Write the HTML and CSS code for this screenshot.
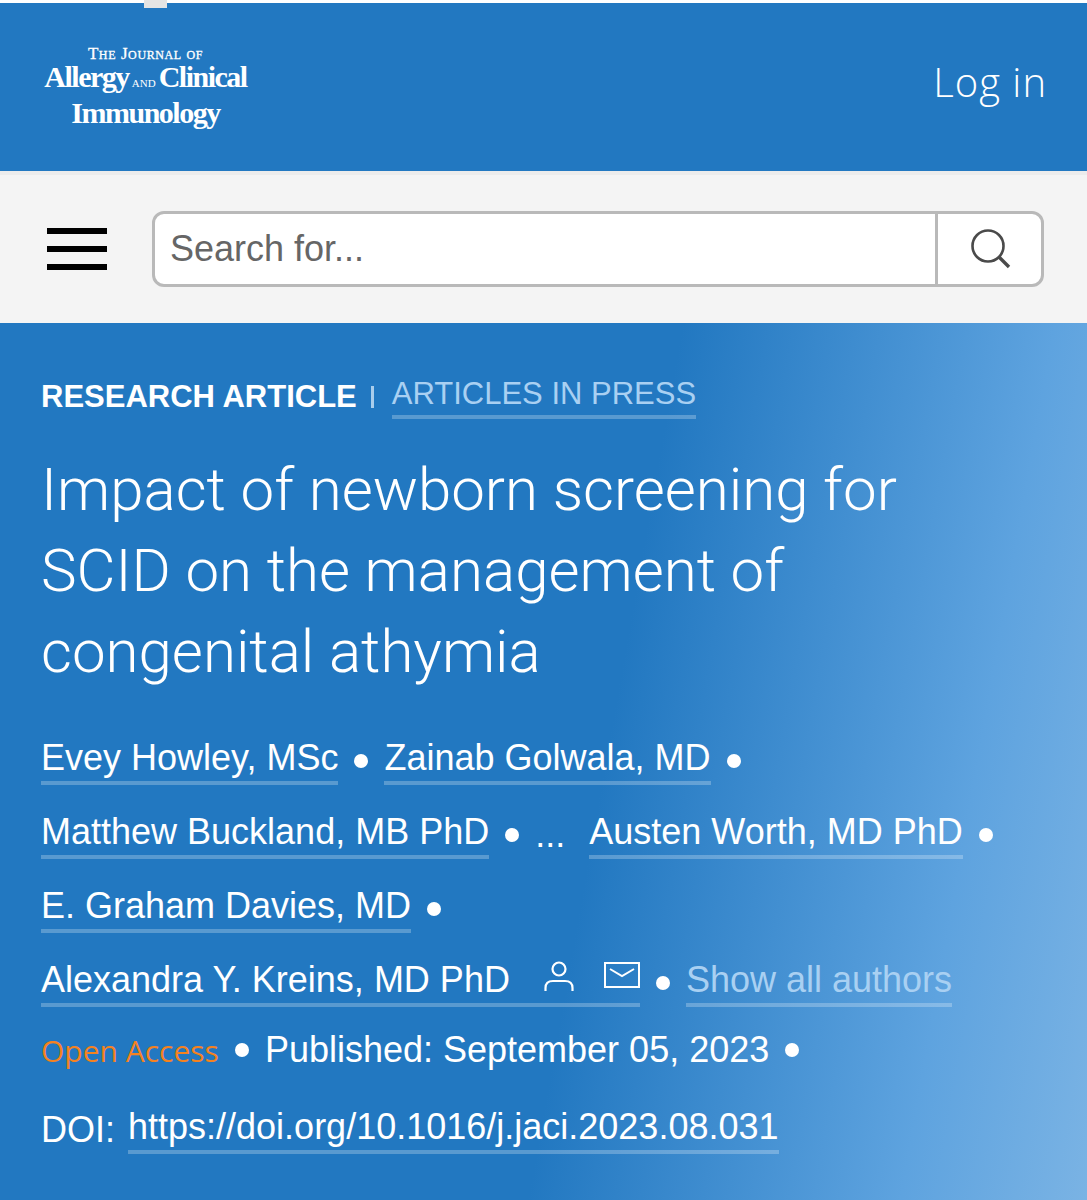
FILE: index.html
```html
<!DOCTYPE html>
<html lang="en">
<head>
  <meta charset="UTF-8">
  <meta name="viewport" content="width=device-width, initial-scale=1.0">
  <title>Impact of newborn screening for SCID</title>
  <link rel="stylesheet" href="styles.css">
</head>
<body>

  <div class="top-strip"><span class="top-tab"></span></div>

  <header class="site-header">
    <a class="logo">
      <span class="logo-line logo-small">The Journal of</span>
      <span class="logo-line logo-big">Allergy<span class="logo-and">and</span>Clinical</span>
      <span class="logo-line logo-big">Immunology</span>
    </a>
    <a class="login">Log in</a>
  </header>

  <nav class="search-bar">
    <div class="burger"><span></span><span></span><span></span></div>
    <div class="search">
      <div class="search-input">Search for...</div>
      <div class="search-btn">
        <svg width="44" height="42" viewBox="0 0 44 42" fill="none" stroke="#4a4a4a">
          <circle cx="20" cy="18" r="15.5" stroke-width="2.6"/>
          <path d="M31 29 L41 39" stroke-width="3.4"/>
        </svg>
      </div>
    </div>
  </nav>

  <main class="hero">
    <div class="kicker">
      <span class="kicker-type">RESEARCH ARTICLE</span>
      <span class="kicker-sep"></span>
      <a class="link kicker-link">ARTICLES IN PRESS</a>
    </div>

    <h1>Impact of newborn screening for SCID on the management of congenital athymia</h1>

    <div class="authors">
      <div class="author-row">
        <a class="link">Evey Howley, MSc</a><i class="dot"></i>
        <a class="link">Zainab Golwala, MD</a><i class="dot"></i>
      </div>
      <div class="author-row">
        <a class="link">Matthew Buckland, MB PhD</a><i class="dot"></i>
        <span class="more">...</span>
        <a class="link">Austen Worth, MD PhD</a><i class="dot"></i>
      </div>
      <div class="author-row">
        <a class="link">E. Graham Davies, MD</a><i class="dot"></i>
      </div>
      <div class="author-row">
        <a class="link corr">Alexandra Y. Kreins, MD PhD
          <svg class="icon-user" width="30" height="32" viewBox="0 0 30 32" fill="none" stroke="#fff" stroke-width="2.2">
            <circle cx="15" cy="9" r="6.5"/>
            <path d="M1.5 31 V28 Q1.5 21 9 21 H21 Q28.5 21 28.5 28 V31"/>
          </svg>
          <svg class="icon-mail" width="36" height="26" viewBox="0 0 36 26" fill="none" stroke="#fff" stroke-width="2">
            <rect x="1" y="1" width="34" height="24"/>
            <path d="M6 7 L18 14 L30 7"/>
          </svg>
        </a><i class="dot"></i>
        <a class="link link-pale">Show all authors</a>
      </div>
    </div>

    <div class="meta-row">
      <span class="open-access">Open Access</span><i class="dot"></i>
      <span class="published">Published: September 05, 2023</span><i class="dot"></i>
    </div>

    <div class="doi-row">
      <span>DOI:</span>
      <a class="link">https://doi.org/10.1016/j.jaci.2023.08.031</a>
    </div>
  </main>

</body>
</html>
```

FILE: styles.css
```css
* {
  box-sizing: border-box;
}

html, body {
  margin: 0;
  padding: 0;
}

body {
  width: 1087px;
  height: 1200px;
  overflow: hidden;
  font-family: 'Liberation Sans', Arial, sans-serif;
  background: #fff;
}

/* white strip above the header */
.top-strip {
  height: 3px;
  position: relative;
  background: #fff;
}

.top-tab {
  position: absolute;
  left: 144px;
  top: 0;
  width: 23px;
  height: 8px;
  background: #e4e4e4;
  z-index: 2;
}

/* Header */
.site-header {
  height: 168px;
  background: #2278c1;
  display: flex;
  justify-content: space-between;
  padding: 42px 40px 0 41px;
  color: #fff;
}

.logo {
  display: flex;
  flex-direction: column;
  align-items: center;
  width: 209px;
  font-family: 'Liberation Serif', serif;
  font-weight: bold;
}

.logo-line {
  display: block;
  white-space: nowrap;
}

.logo-small {
  font-size: 17px;
  line-height: 17px;
  font-variant: small-caps;
  letter-spacing: 0.6px;
  font-weight: normal;
  -webkit-text-stroke: 0.3px #fff;
}

.logo-big {
  font-size: 30px;
  line-height: 30px;
  letter-spacing: -1.5px;
}

.logo-and {
  font-size: 11px;
  letter-spacing: 0;
  font-weight: normal;
  text-transform: uppercase;
  margin: 0 3px 0 3px;
}

.login {
  font-family: 'Open Sans', sans-serif;
  font-size: 40px;
  line-height: 74px;
  letter-spacing: 1px;
  font-weight: 300;
}

/* Search row */
.search-bar {
  height: 152px;
  background: #f4f4f4;
  border-top: 4px solid #ececec;
  display: flex;
  align-items: center;
  padding: 0 43px 0 47px;
  gap: 45px;
}

.burger {
  width: 60px;
  display: flex;
  flex-direction: column;
  gap: 12px;
}

.burger span {
  display: block;
  height: 6px;
  background: #000;
}

.search {
  flex: 1;
  height: 76px;
  display: flex;
  background: #fff;
  border: 3px solid #b9b9b9;
  border-radius: 12px;
}

.search-input {
  flex: 1;
  padding-left: 15px;
  font-size: 36px;
  line-height: 70px;
  color: #666;
}

.search-btn {
  width: 106px;
  border-left: 3px solid #b9b9b9;
  display: flex;
  align-items: center;
  justify-content: center;
}

/* Article hero */
.hero {
  height: 877px;
  padding: 52px 41px 0;
  color: #fff;
  background: linear-gradient(100deg, #2278c1 0%, #2278c1 55%, #5ea3df 85%, #7ab3e4 100%);
}

.link {
  color: #fff;
  text-decoration: none;
  border-bottom: 4px solid rgba(255, 255, 255, 0.25);
  padding-bottom: 2px;
}

.kicker {
  display: flex;
  align-items: center;
  font-size: 31px;
  line-height: 38px;
}

.kicker-type {
  font-weight: bold;
}

.kicker-sep {
  width: 3px;
  height: 22px;
  margin: 0 18px 0 14px;
  background: #a9cdec;
}

.kicker-link,
.link-pale {
  color: #a9d0f2;
}

h1 {
  margin: 30px 0 32px;
  font-family: Roboto, sans-serif;
  font-size: 60px;
  line-height: 81px;
  font-weight: 300;
  max-width: 930px;
}

.authors {
  font-size: 36px;
}

.author-row {
  display: flex;
  align-items: center;
  height: 74px;
}

.dot {
  display: inline-block;
  width: 14px;
  height: 14px;
  border-radius: 50%;
  background: #fff;
  margin: 0 16px;
}

.more {
  margin: 0 24px 0 0;
}

.icon-user {
  margin: 0 20px 0 24px;
  vertical-align: 0;
}

.icon-mail {
  vertical-align: 4px;
}

.meta-row {
  display: flex;
  align-items: center;
  height: 60px;
  font-size: 36px;
}

.open-access {
  color: #f58220;
  font-family: 'Open Sans', sans-serif;
  font-size: 30px;
}

.doi-row {
  display: flex;
  align-items: center;
  gap: 13px;
  height: 100px;
  font-size: 36px;
}
```
